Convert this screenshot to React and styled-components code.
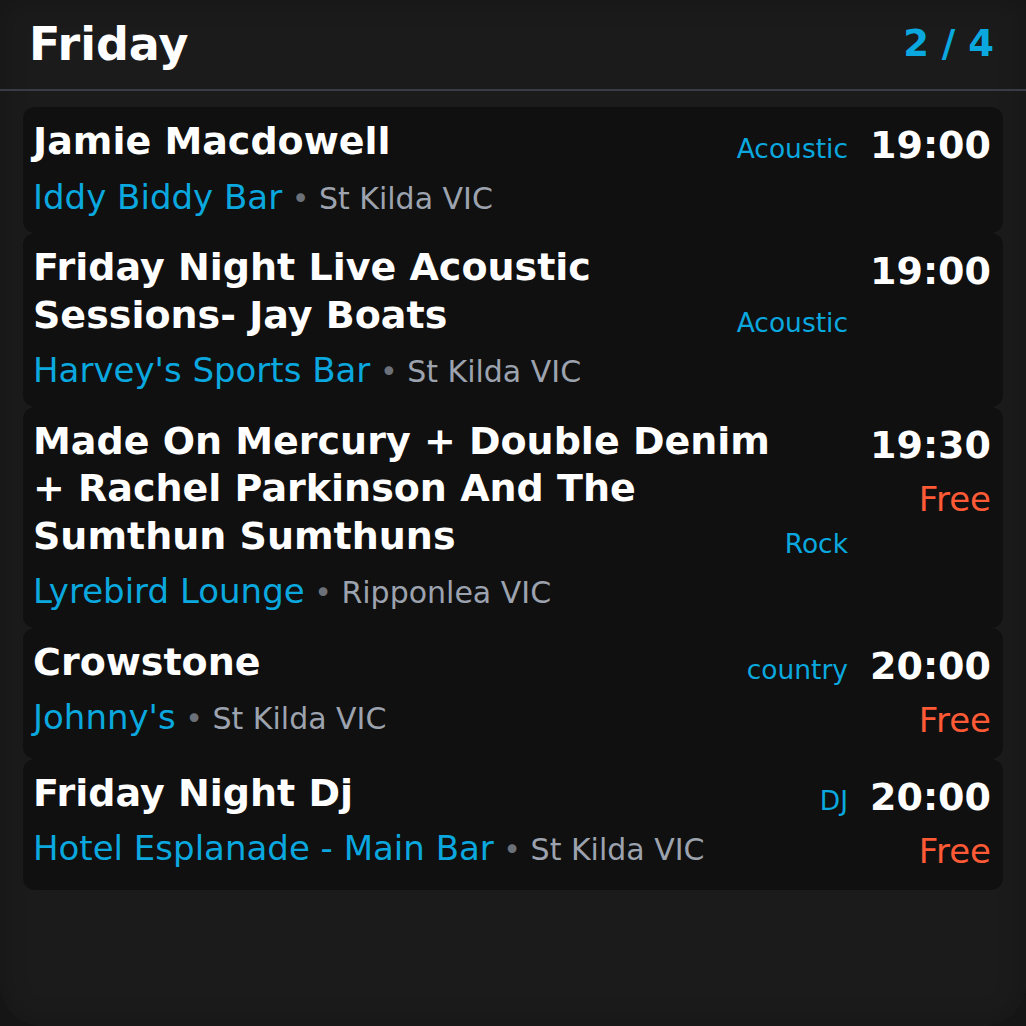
import React from 'react'
import styled, { createGlobalStyle } from 'styled-components'

const GlobalStyle = createGlobalStyle`
    html, body {
        margin: 0;
        padding: 0;
        background: #151515;
    }
    body {
        font-family: "DejaVu Sans", "Liberation Sans", sans-serif;
    }
`

const Main = styled.div`
    width: 1026px;
    min-height: 1026px;
    box-sizing: border-box;
    background: #1b1b1b;
    border-radius: 0 0 40px 40px;
    box-shadow: inset 0 0 28px rgba(0, 0, 0, 0.22);
    display: flex;
    flex-direction: column;
`

const Header = styled.div`
    height: 89px;
    display: flex;
    align-items: center;
    justify-content: space-between;
    padding: 0 32px 0 29px;
    border-bottom: 2px solid #373c46;
`

const Day = styled.div`
    color: #ffffff;
    font-size: 46px;
    font-weight: bold;
    line-height: 1.2;
`

const Pager = styled.div`
    color: #0aa8df;
    font-size: 37px;
    font-weight: bold;
    line-height: 1.2;
`

const Lista = styled.div`
    display: flex;
    flex-direction: column;
    padding: 16px 23px 0 23px;
`

const Card = styled.div`
    display: flex;
    gap: 22px;
    padding: 11px 12px 15px 10px;
    background: #101010;
    border-radius: 12px;
`

const Esquerda = styled.div`
    flex: 1;
    min-width: 0;
    display: flex;
    flex-direction: column;
`

const TitleRow = styled.div`
    display: flex;
    align-items: flex-end;
    gap: 12px;
`

const Title = styled.div`
    flex: 1;
    color: #ffffff;
    font-size: 38px;
    font-weight: bold;
    line-height: 1.25;
`

const Genre = styled.div`
    color: #0aa8df;
    font-size: 26.5px;
    line-height: 1.25;
    white-space: nowrap;
`

const Local = styled.div`
    margin-top: 10px;
    font-size: 34px;
    line-height: 1.25;
    white-space: nowrap;
`

const Venue = styled.span`
    color: #0aa8df;
`

const Bullet = styled.span`
    color: #6b7079;
    font-size: 30px;
`

const Place = styled.span`
    color: #9ca3af;
    font-size: 30px;
`

const Direita = styled.div`
    display: flex;
    flex-direction: column;
    align-items: flex-end;
`

const Hora = styled.div`
    color: #ffffff;
    font-size: 38px;
    font-weight: bold;
    line-height: 1.45;
`

const Preco = styled.div`
    margin-top: 2px;
    color: #ff5a36;
    font-size: 34px;
    line-height: 48px;
`

const eventos = [
    { title: 'Jamie Macdowell', genre: 'Acoustic', venue: 'Iddy Biddy Bar', place: 'St Kilda VIC', time: '19:00' },
    { title: 'Friday Night Live Acoustic Sessions- Jay Boats', genre: 'Acoustic', venue: "Harvey's Sports Bar", place: 'St Kilda VIC', time: '19:00' },
    { title: 'Made On Mercury + Double Denim + Rachel Parkinson And The Sumthun Sumthuns', genre: 'Rock', venue: 'Lyrebird Lounge', place: 'Ripponlea VIC', time: '19:30', price: 'Free' },
    { title: 'Crowstone', genre: 'country', venue: "Johnny's", place: 'St Kilda VIC', time: '20:00', price: 'Free' },
    { title: 'Friday Night Dj', genre: 'DJ', venue: 'Hotel Esplanade - Main Bar', place: 'St Kilda VIC', time: '20:00', price: 'Free' },
]

const App = () => {
    return (
        <Main>
            <GlobalStyle />
            <Header>
                <Day>Friday</Day>
                <Pager>2 / 4</Pager>
            </Header>
            <Lista>
                {eventos.map((ev, i) => (
                    <Card key={i}>
                        <Esquerda>
                            <TitleRow>
                                <Title>{ev.title}</Title>
                                <Genre>{ev.genre}</Genre>
                            </TitleRow>
                            <Local>
                                <Venue>{ev.venue}</Venue>
                                <Bullet> • </Bullet>
                                <Place>{ev.place}</Place>
                            </Local>
                        </Esquerda>
                        <Direita>
                            <Hora>{ev.time}</Hora>
                            {ev.price && <Preco>{ev.price}</Preco>}
                        </Direita>
                    </Card>
                ))}
            </Lista>
        </Main>
    )
}

export default App
